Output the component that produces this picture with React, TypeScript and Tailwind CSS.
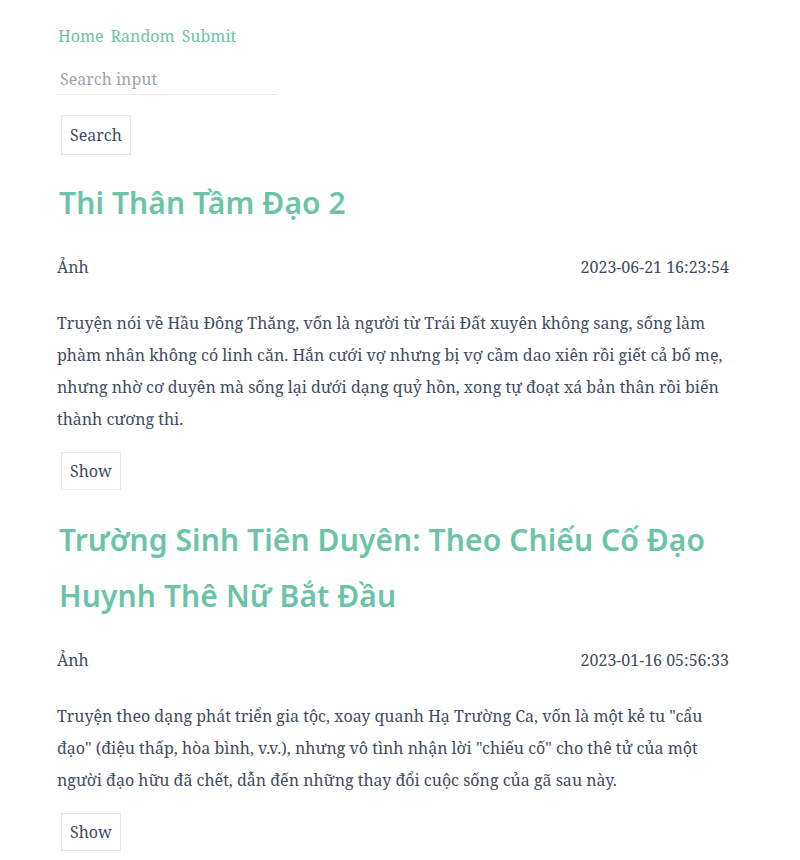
import { useState } from "react";

interface Story {
  title: string;
  author: string;
  date: string;
  summary: string;
}

const stories: Story[] = [
  {
    title: "Thi Thân Tầm Đạo 2",
    author: "Ảnh",
    date: "2023-06-21 16:23:54",
    summary:
      "Truyện nói về Hầu Đông Thăng, vốn là người từ Trái Đất xuyên không sang, sống làm phàm nhân không có linh căn. Hắn cưới vợ nhưng bị vợ cầm dao xiên rồi giết cả bố mẹ, nhưng nhờ cơ duyên mà sống lại dưới dạng quỷ hồn, xong tự đoạt xá bản thân rồi biến thành cương thi.",
  },
  {
    title: "Trường Sinh Tiên Duyên: Theo Chiếu Cố Đạo Huynh Thê Nữ Bắt Đầu",
    author: "Ảnh",
    date: "2023-01-16 05:56:33",
    summary:
      'Truyện theo dạng phát triển gia tộc, xoay quanh Hạ Trường Ca, vốn là một kẻ tu "cẩu đạo" (điệu thấp, hòa bình, v.v.), nhưng vô tình nhận lời "chiếu cố" cho thê tử của một người đạo hữu đã chết, dẫn đến những thay đổi cuộc sống của gã sau này.',
  },
];

const serif = "font-['Noto_Serif','DejaVu_Serif',serif]";

export default function App() {
  const [query, setQuery] = useState("");

  return (
    <div className={`min-h-screen bg-white text-[#3f4b5e] ${serif}`}>
      <div className="w-[672px] ml-[57px] pt-[24px]">
        {/* Nav */}
        <nav className="ml-[1px] flex gap-[7px] text-[16px] leading-6 text-[#6cc4a8]">
          <a href="#">Home</a>
          <a href="#">Random</a>
          <a href="#">Submit</a>
        </nav>

        {/* Search */}
        <input
          value={query}
          onChange={(e) => setQuery(e.target.value)}
          placeholder="Search input"
          className="mt-[19px] block w-[220px] border-b border-gray-200 px-[3px] pb-[3px] text-[16px] leading-6 outline-none placeholder:text-[#9ca3af]"
        />
        <button className="ml-[4px] mt-[20px] border border-gray-200 px-[8px] py-[7px] text-[16px] leading-6">
          Search
        </button>

        {stories.map((s, i) => (
          <article key={s.date}>
            <h2
              className={`${i === 0 ? "mt-[20px]" : "mt-[22px]"} pl-[2px] font-['Noto_Sans','Open_Sans',sans-serif] text-[30px] font-semibold leading-[56px] tracking-[0.1px] text-[#6cc4a8]`}
            >
              {s.title}
            </h2>
            <div className="mt-[24px] flex justify-between text-[16px] leading-6">
              <span>{s.author}</span>
              <span>{s.date}</span>
            </div>
            <p className="mt-[28px] text-[16px] leading-8">{s.summary}</p>
            <button className="ml-[4px] mt-[17px] border border-gray-200 px-[8px] py-[6px] text-[16px] leading-6">
              Show
            </button>
          </article>
        ))}
      </div>
    </div>
  );
}
